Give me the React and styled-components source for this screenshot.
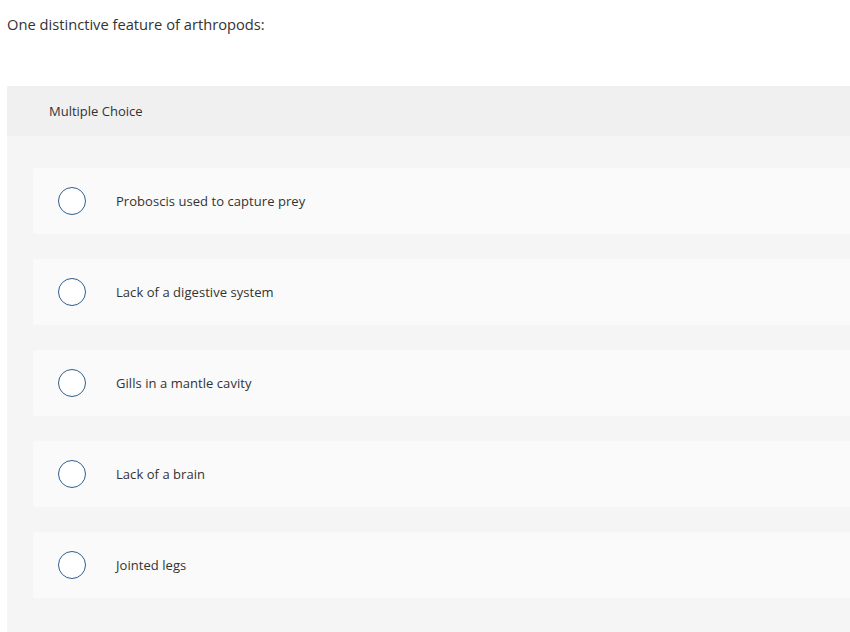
import styled, { createGlobalStyle } from 'styled-components'

const Global = createGlobalStyle`
body {
  margin: 0;
  background: #fff;
  font-family: "Open Sans", Lato, sans-serif;
  color: #333;
}
`

const Page = styled.div`
padding: 14px 0 0 7px;
`
const Question = styled.p`
margin: 0 0 52px;
font-size: 14.7px;
line-height: 20px;
color: #333;
`
const Panel = styled.section`
background: #f5f5f5;
min-height: 546px;
`
const PanelHeader = styled.div`
display: flex;
align-items: center;
height: 50px;
padding-left: 42px;
background: #f0f0f0;
font-size: 13px;
color: #333;
`
const Options = styled.div`
display: flex;
flex-direction: column;
gap: 25px;
padding: 32px 0 0 26px;
`
const Option = styled.label`
display: flex;
align-items: center;
height: 66px;
background: #fafafa;
border-radius: 3px 0 0 3px;
cursor: pointer;
`
const Radio = styled.span`
flex: 0 0 auto;
width: 28px;
height: 28px;
box-sizing: border-box;
margin: 0 30px 0 25px;
border: 1.5px solid #2e5f8e;
border-radius: 50%;
background: #fff;
`
const OptionText = styled.span`
font-size: 13px;
letter-spacing: 0.05px;
color: #333;
`

const choices = [
  'Proboscis used to capture prey',
  'Lack of a digestive system',
  'Gills in a mantle cavity',
  'Lack of a brain',
  'Jointed legs',
]

export default function App() {
  return (
    <Page>
      <Global />
      <Question>One distinctive feature of arthropods:</Question>
      <Panel>
        <PanelHeader>Multiple Choice</PanelHeader>
        <Options>
          {choices.map(c => (
            <Option key={c}>
              <Radio />
              <OptionText>{c}</OptionText>
            </Option>
          ))}
        </Options>
      </Panel>
    </Page>
  )
}
